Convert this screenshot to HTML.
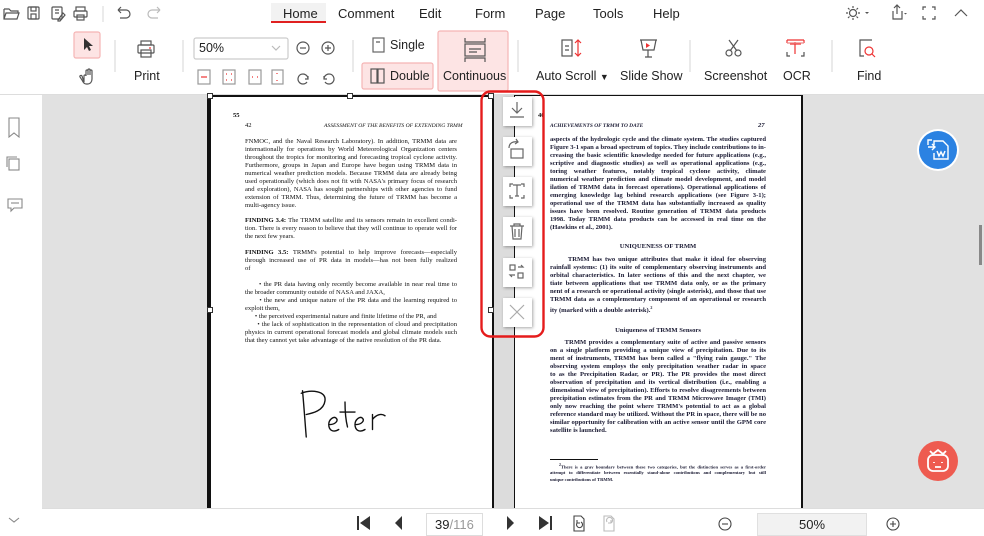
<!DOCTYPE html>
<html><head><meta charset="utf-8"><style>
*{margin:0;padding:0;box-sizing:border-box}
body{width:984px;height:534px;overflow:hidden;background:#fff;font-family:"Liberation Sans",sans-serif;color:#222;position:relative}
.a{position:absolute}
.tab{position:absolute;top:6px;font-size:13px;color:#222}
.lbl{position:absolute;font-size:12.5px;color:#222;white-space:nowrap}
.pg{position:absolute;font-family:"Liberation Serif",serif;font-size:6.6px;line-height:8px;color:#111;white-space:nowrap}
.j{text-align:justify;text-align-last:justify;white-space:normal;height:8px;overflow:hidden}
.rp{font-weight:bold;color:#1a1a33}
.btn{position:absolute;left:503px;width:29px;height:29px;background:#fff;box-shadow:1px 1px 3px rgba(0,0,0,.35)}
.h{position:absolute;width:6px;height:6px;background:#fff;border:1px solid #333}
</style></head><body>
<svg class="a" style="left:0;top:0" width="984" height="95" fill="none" stroke="#555" stroke-width="1.2">
<path d="M4 9h5l2 2h7v2M4 9v10h13l2-6H6l-2 6"/>
<rect x="28" y="7" width="11" height="12" rx="1"/><rect x="31" y="7" width="5" height="4"/><rect x="31" y="14" width="5" height="5"/>
<rect x="52" y="7" width="10" height="12" rx="1"/><path d="M55 10h4M55 13h4M58 20l5-7 2 2-5 6h-2z"/>
<rect x="76" y="7" width="9" height="4"/><rect x="74" y="11" width="13" height="6" rx="1"/><rect x="77" y="15" width="7" height="5"/>
<path d="M103 6v16" stroke="#ddd"/>
<path d="M118 10h8a4 4 0 010 8h-6M118 10l3-3M118 10l3 3"/>
<path d="M160 10h-8a4 4 0 000 8h6M160 10l-3-3M160 10l-3 3" stroke="#bbb"/>
<circle cx="853" cy="13" r="3.5"/><path d="M853 6v2M853 18v2M846 13h2M858 13h2M848 8l1.5 1.5M856.5 16.5l1.5 1.5M848 18l1.5-1.5M856.5 9.5l1.5-1.5"/>
<path d="M865 12l2 2 2-2z" fill="#555" stroke="none"/>
<path d="M893 11v8h9v-8M897 5v9M894 8l3-3 3 3"/><path d="M904 13l1.5 1.5 1.5-1.5z" fill="#555" stroke="none"/>
<path d="M923 10V7h3M932 7h3v3M935 16v3h-3M926 19h-3v-3"/>
<path d="M955 16l6-6 6 6"/>
<rect x="74" y="32" width="26" height="26" rx="2" fill="#fde4e4" stroke="#f5b5b5"/>
<path d="M84 38v12l3-3 2 4 2-1-2-4h4z" fill="#333" stroke="none"/>
<path d="M84 82v-6a1 1 0 012 0v-5a1 1 0 012 0v4-5a1 1 0 012 0v5-4a1 1 0 012 0v8c0 3-2 5-4 5h-2c-2 0-3-2-4-4l-2-3a1 1 0 012-1z"/>
<path d="M115 40v32M183 40v32M353 40v32M518 40v32M690 40v32M832 40v32" stroke="#ddd"/>
<rect x="141" y="41" width="10" height="4"/><rect x="138" y="45" width="16" height="8" rx="1"/><rect x="141" y="50" width="10" height="7"/><path d="M149 48h2" stroke="#e33"/>
<rect x="194" y="38" width="94" height="21" rx="2" stroke="#ccc"/><path d="M272 46l4 4 4-4" stroke="#bbb"/>
<circle cx="303" cy="48" r="6"/><path d="M300 48h6"/>
<circle cx="328" cy="48" r="6"/><path d="M325 48h6M328 45v6"/>
<rect x="198" y="70" width="12" height="14" stroke="#999"/><path d="M201 77h6" stroke="#e33"/>
<rect x="223" y="70" width="12" height="14" stroke="#999"/><path d="M226 74h1M231 74h1M226 80h1M231 80h1" stroke="#e33"/>
<rect x="249" y="70" width="12" height="14" stroke="#999"/><path d="M252 77h1M257 77h1" stroke="#e33"/>
<rect x="272" y="70" width="11" height="14" stroke="#999"/><path d="M277 73v1M277 80v1" stroke="#e33"/>
<path d="M308 79a5 5 0 10-1 3M308 76v3h-3"/>
<path d="M324 79a5 5 0 111 3M324 76v3h3"/>
<rect x="373" y="38" width="11" height="14" stroke="#666"/><path d="M376 42h4"/>
<rect x="362" y="63" width="71" height="26" rx="2" fill="#fde4e4" stroke="#f5b5b5"/>
<rect x="371" y="69" width="6" height="14"/><rect x="378" y="69" width="6" height="14"/>
<rect x="438" y="31" width="70" height="60" rx="2" fill="#fde4e4" stroke="#f5b5b5"/>
<path d="M465 38v4h20v-4M465 62v-4h20v4"/><rect x="465" y="44" width="20" height="12"/><path d="M469 49h12M469 52h8"/>
<rect x="562" y="40" width="10" height="16"/><path d="M565 46h4M565 50h4"/><path d="M578 40v16M575 43l3-3 3 3M575 53l3 3 3-3" stroke="#e33"/>
<path d="M640 40h17M641 40l2 10h11l2-10M648 50v7M645 57h7"/><path d="M646 43v5l4-2.5z" fill="#e33" stroke="none"/>
<circle cx="729" cy="53" r="3"/><circle cx="738" cy="53" r="3"/><path d="M730 51l8-11M737 51l-8-11"/>
<path d="M787 40h17M787 40v3M804 40v3M795 42v12M790 44h11" stroke="#e33"/><path d="M787 43h17" stroke="#e88"/><path d="M787 52v4h3M804 52v4h-3"/>
<path d="M872 40h-12v16h4"/><circle cx="869" cy="51" r="4" stroke="#e33"/><path d="M872 54l3 3" stroke="#e33"/>
</svg>
<div class="a" style="left:271px;top:3px;width:55px;height:19px;background:#f2f2f2"></div>
<div class="a" style="left:271px;top:21px;width:55px;height:2px;background:#e02020"></div>
<div class="tab" style="left:283px">Home</div>
<div class="tab" style="left:338px">Comment</div>
<div class="tab" style="left:419px">Edit</div>
<div class="tab" style="left:475px">Form</div>
<div class="tab" style="left:535px">Page</div>
<div class="tab" style="left:593px">Tools</div>
<div class="tab" style="left:653px">Help</div>
<div class="lbl" style="left:134px;top:69px">Print</div>
<div class="lbl" style="left:199px;top:41px">50%</div>
<div class="lbl" style="left:390px;top:38px">Single</div>
<div class="lbl" style="left:390px;top:69px">Double</div>
<div class="lbl" style="left:443px;top:69px">Continuous</div>
<div class="lbl" style="left:536px;top:69px">Auto Scroll <span style="font-size:9px">▼</span></div>
<div class="lbl" style="left:620px;top:69px">Slide Show</div>
<div class="lbl" style="left:704px;top:69px">Screenshot</div>
<div class="lbl" style="left:783px;top:69px">OCR</div>
<div class="lbl" style="left:857px;top:69px">Find</div>
<div class="a" style="left:0;top:94px;width:984px;height:1px;background:#ddd"></div>
<svg class="a" style="left:0;top:95px" width="42" height="439" fill="none" stroke="#888" stroke-width="1.1">
<path d="M9 23v19l5-4 5 4V23z"/>
<rect x="9" y="64" width="10" height="11"/><path d="M7 72V62h10"/>
<path d="M8 104h14v9h-8l-3 3v-3H8z"/><path d="M11 108h8"/>
<path d="M9 423l5 4 5-4"/>
</svg>
<div class="a" style="left:42px;top:95px;width:942px;height:413px;background:#e1e1e1"></div>
<div class="a" style="left:979px;top:225px;width:3px;height:40px;background:#888"></div>
<div class="a" style="left:207px;top:95px;width:2px;height:413px;background:#111"></div>
<div class="a" style="left:209px;top:95px;width:285px;height:413px;background:#fff;border-left:2px solid #111;border-right:2px solid #111;border-top:2px solid #111"></div>
<div class="a" style="left:491px;top:95px;width:3px;height:413px;border-right:1px solid #111"></div>
<div class="h" style="left:207px;top:93px"></div><div class="h" style="left:347px;top:93px"></div><div class="h" style="left:488px;top:93px"></div>
<div class="h" style="left:207px;top:307px"></div><div class="h" style="left:488px;top:307px"></div>
<div class="pg" style="left:233px;top:112px;font-weight:bold">55</div>
<div class="pg" style="left:245px;top:122px">42</div>
<div class="pg" style="left:324px;top:122px;font-style:italic;font-size:5.6px">ASSESSMENT OF THE BENEFITS OF EXTENDING TRMM</div>
<div class="pg" style="left:245px;top:138px;width:212px">
<div class="j">FNMOC, and the Naval Research Laboratory). In addition, TRMM data are used</div>
<div class="j">internationally for operations by World Meteorological Organization centers</div>
<div class="j">throughout the tropics for monitoring and forecasting tropical cyclone activity.</div>
<div class="j">Furthermore, groups in Japan and Europe have begun using TRMM data in</div>
<div class="j">numerical weather prediction models. Because TRMM data are already being</div>
<div class="j">used operationally (which does not fit with NASA's primary focus of research</div>
<div class="j">and exploration), NASA has sought partnerships with other agencies to fund</div>
<div class="j">extension of TRMM. Thus, determining the future of TRMM has become a</div>
<div>multi-agency issue.</div>
<div style="height:7px"></div>
<div class="j"><b>FINDING 3.4:</b> The TRMM satellite and its sensors remain in excellent condi-</div>
<div class="j">tion. There is every reason to believe that they will continue to operate well for</div>
<div>the next few years.</div>
<div style="height:8px"></div>
<div class="j"><b>FINDING 3.5:</b> TRMM's potential to help improve forecasts—especially</div>
<div class="j">through increased use of PR data in models—has not been fully realized because</div>
<div>of</div>
<div style="height:8px"></div>
<div class="j">&nbsp;&nbsp;&nbsp;&nbsp;&nbsp;&nbsp;• the PR data having only recently become available in near real time to</div>
<div>the broader community outside of NASA and JAXA,</div>
<div class="j">&nbsp;&nbsp;&nbsp;&nbsp;&nbsp;&nbsp;• the new and unique nature of the PR data and the learning required to</div>
<div>exploit them,</div>
<div>&nbsp;&nbsp;&nbsp;&nbsp;&nbsp;&nbsp;• the perceived experimental nature and finite lifetime of the PR, and</div>
<div class="j">&nbsp;&nbsp;&nbsp;&nbsp;&nbsp;&nbsp;• the lack of sophistication in the representation of cloud and precipitation</div>
<div class="j">physics in current operational forecast models and global climate models such</div>
<div>that they cannot yet take advantage of the native resolution of the PR data.</div>
</div>
<svg class="a" style="left:300px;top:387px" width="100" height="55" fill="none" stroke="#111" stroke-width="1.1" stroke-linecap="round">
<g transform="scale(1.25)">
<path d="M2 3c1 10 2 25 3 37M1 5c8-3 20-2 19 6s-10 10-15 11"/>
<path d="M24 30c4 0 7-3 5-5s-6 1-6 5 3 7 8 4"/>
<path d="M36 12c0 8 1 16 2 20M32 20h12"/>
<path d="M45 30c4 0 7-3 5-5s-6 1-6 5 3 7 8 4"/>
<path d="M58 22v12M58 26c3-4 7-5 10-3"/>
</g>
</svg>
<div class="a" style="left:494px;top:95px;width:20px;height:413px;background:#dcdcdc"></div>
<div class="a" style="left:514px;top:95px;width:289px;height:413px;background:#fff;border-left:1px solid #111;border-right:2px solid #111;border-top:1px solid #111"></div>
<div class="pg" style="left:538px;top:112px;font-weight:bold">40</div>
<div class="pg rp" style="left:550px;top:122px;font-style:italic;font-size:5.4px">ACHIEVEMENTS OF TRMM TO DATE</div>
<div class="pg rp" style="left:758px;top:122px;font-style:italic">27</div>
<div class="pg rp" style="left:550px;top:136px;width:216px">
<div class="j">aspects of the hydrologic cycle and the climate system. The studies captured in</div>
<div class="j">Figure 3-1 span a broad spectrum of topics. They include contributions to in-</div>
<div class="j">creasing the basic scientific knowledge needed for future applications (e.g., de-</div>
<div class="j">scriptive and diagnostic studies) as well as operational applications (e.g., moni-</div>
<div class="j">toring weather features, notably tropical cyclone activity, climate monitoring,</div>
<div class="j">numerical weather prediction and climate model development, and model assim-</div>
<div class="j">ilation of TRMM data in forecast operations). Operational applications of the</div>
<div class="j">emerging knowledge lag behind research applications (see Figure 3-1); however,</div>
<div class="j">operational use of the TRMM data has substantially increased as quality control</div>
<div class="j">issues have been resolved. Routine generation of TRMM data products started in</div>
<div class="j">1998. Today TRMM data products can be accessed in real time on the Internet</div>
<div>(Hawkins et al., 2001).</div>
<div style="height:11px"></div>
<div style="text-align:center">UNIQUENESS OF TRMM</div>
<div style="height:5px"></div>
<div class="j">&nbsp;&nbsp;&nbsp;&nbsp;&nbsp;&nbsp;TRMM has two unique attributes that make it ideal for observing tropical</div>
<div class="j">rainfall systems: (1) its suite of complementary observing instruments and (2) its</div>
<div class="j">orbital characteristics. In later sections of this and the next chapter, we differen-</div>
<div class="j">tiate between applications that use TRMM data only, or as the primary compo-</div>
<div class="j">nent of a research or operational activity (single asterisk), and those that use</div>
<div class="j">TRMM data as a complementary component of an operational or research activ-</div>
<div>ity (marked with a double asterisk).<sup style="font-size:4px">2</sup></div>
<div style="height:12px"></div>
<div style="text-align:center">Uniqueness of TRMM Sensors</div>
<div style="height:4px"></div>
<div class="j">&nbsp;&nbsp;&nbsp;&nbsp;&nbsp;&nbsp;TRMM provides a complementary suite of active and passive sensors flown</div>
<div class="j">on a single platform providing a unique view of precipitation. Due to its comple-</div>
<div class="j">ment of instruments, TRMM has been called a "flying rain gauge." The TRMM</div>
<div class="j">observing system employs the only precipitation weather radar in space (referred</div>
<div class="j">to as the Precipitation Radar, or PR). The PR provides the most direct method of</div>
<div class="j">observation of precipitation and its vertical distribution (i.e., enabling a three-</div>
<div class="j">dimensional view of precipitation). Efforts to resolve disagreements between</div>
<div class="j">precipitation estimates from the PR and TRMM Microwave Imager (TMI) are</div>
<div class="j">only now reaching the point where TRMM's potential to act as a global rainfall</div>
<div class="j">reference standard may be utilized. Without the PR in space, there will be no</div>
<div class="j">similar opportunity for calibration with an active sensor until the GPM core</div>
<div>satellite is launched.</div>
</div>
<div class="a" style="left:550px;top:459px;width:48px;height:1px;background:#111"></div>
<div class="pg rp" style="left:550px;top:462px;width:216px;font-size:4.6px;line-height:7px">
<div class="j" style="height:7px">&nbsp;&nbsp;&nbsp;&nbsp;<sup>2</sup>There is a gray boundary between these two categories, but the distinction serves as a first-order</div>
<div class="j" style="height:7px">attempt to differentiate between essentially stand-alone contributions and complementary but still</div>
<div>unique contributions of TRMM.</div>
</div>
<div class="btn" style="top:97px"></div><div class="btn" style="top:137px"></div><div class="btn" style="top:177px"></div>
<div class="btn" style="top:217px"></div><div class="btn" style="top:258px"></div><div class="btn" style="top:298px"></div>
<svg class="a" style="left:480px;top:90px" width="66" height="250" fill="none" stroke="#666" stroke-width="1.2">
<rect x="1.5" y="1.5" width="62" height="245" rx="9" stroke="#e51c1c" stroke-width="2.4"/>
<path d="M37 12v11M32 18l5 5 5-5M30 27h14"/>
<rect x="31" y="59" width="12" height="9"/><path d="M29 58c0-5 4-7 9-6M36 49l2 3-3 2"/>
<path d="M30 97v-3h3M41 94h3v3M44 105v3h-3M33 108h-3v-3M33 95h8M37 95v11M35 106h4"/>
<path d="M30 136h14M34 136v-2h6v2M32 136l1 13h8l1-13M35 139v8M39 139v8"/>
<rect x="30" y="175" width="5" height="5"/><rect x="38" y="183" width="5" height="5"/><path d="M38 177h5l-2-2M35 185h-5l2 2"/>
<path d="M30 215l14 14M44 215l-14 14" stroke="#aaa"/>
</svg>
<svg class="a" style="left:916px;top:128px" width="44" height="44"><circle cx="22" cy="22" r="21" fill="#fff"/><circle cx="22" cy="22" r="19" fill="#2b82e2"/>
<g fill="none" stroke="#fff" stroke-width="1.4"><path d="M16 12h-4v5M12 19h7M16 16l3 3-3 3"/><path d="M18 17v-4h9l5 5v13H18v-6"/><path d="M21 23l2 5 2-4 2 4 2-5"/></g></svg>
<svg class="a" style="left:916px;top:439px" width="44" height="44"><circle cx="22" cy="22" r="20" fill="#ee5b50"/>
<g fill="none" stroke="#fff" stroke-width="1.8"><rect x="12" y="16" width="20" height="16" rx="5"/><path d="M14 12l3 3 5-4 5 4 3-3"/><path d="M18 23v1M26 23v1M19 28h6"/></g></svg>
<div class="a" style="left:42px;top:508px;width:942px;height:26px;background:#fff;border-top:1px solid #ddd"></div>
<svg class="a" style="left:340px;top:508px" width="570" height="26" fill="#333" stroke="none">
<path d="M17 8h2v14h-2zM30 8v14l-10-7z"/><path d="M62 8v14l-7-7z"/>
<path d="M167 8l7 7-7 7z"/><path d="M199 8l10 7-10 7zM210 8h2v14h-2z"/>
<g fill="none" stroke="#444" stroke-width="1.1"><path d="M234 8h7l3 3v12h-10zM237 15a3 3 0 104-1M237 15h3M237 15v-3"/></g>
<g fill="none" stroke="#bbb" stroke-width="1.1"><path d="M264 8h7l3 3v12h-10zM271 15a3 3 0 10-4-1M271 15h-3M271 15v-3"/></g>
<g fill="none" stroke="#444" stroke-width="1.1"><circle cx="385" cy="16" r="6"/><path d="M382 16h6"/><circle cx="553" cy="16" r="6"/><path d="M550 16h6M553 13v6"/></g>
</svg>
<div class="a" style="left:426px;top:513px;width:57px;height:23px;border:1px solid #ddd;font-size:13px;padding:3px 0 0 8px">39<span style="color:#999">/116</span></div>
<div class="a" style="left:757px;top:513px;width:110px;height:23px;background:#f2f2f2;border:1px solid #e0e0e0;font-size:13px;text-align:center;padding-top:3px">50%</div>
</body></html>
